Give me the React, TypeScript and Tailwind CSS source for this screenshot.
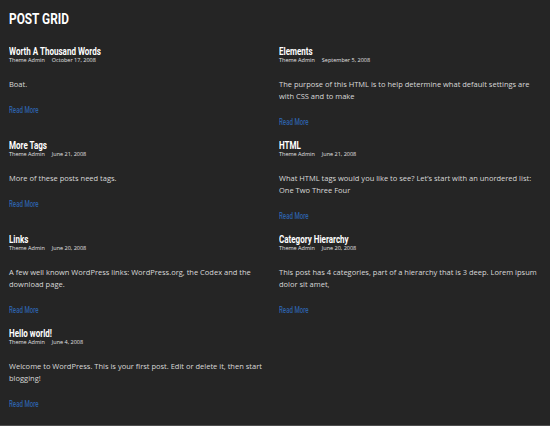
const posts = [
  {
    title: "Worth A Thousand Words",
    date: "October 17, 2008",
    excerpt: "Boat.",
  },
  {
    title: "Elements",
    date: "September 5, 2008",
    excerpt:
      "The purpose of this HTML is to help determine what default settings are with CSS and to make",
  },
  {
    title: "More Tags",
    date: "June 21, 2008",
    excerpt: "More of these posts need tags.",
  },
  {
    title: "HTML",
    date: "June 21, 2008",
    excerpt:
      "What HTML tags would you like to see? Let’s start with an unordered list: One Two Three Four",
  },
  {
    title: "Links",
    date: "June 20, 2008",
    excerpt:
      "A few well known WordPress links: WordPress.org, the Codex and the download page.",
  },
  {
    title: "Category Hierarchy",
    date: "June 20, 2008",
    excerpt:
      "This post has 4 categories, part of a hierarchy that is 3 deep. Lorem ipsum dolor sit amet,",
  },
  {
    title: "Hello world!",
    date: "June 4, 2008",
    excerpt:
      "Welcome to WordPress. This is your first post. Edit or delete it, then start blogging!",
  },
];

// Roboto squeezed sideways stands in for a condensed display face
const display = "font-['Roboto',sans-serif]";

type Post = (typeof posts)[number];

const PostCard = ({ post }: { post: Post }) => {
  return (
    <article className="flex flex-col">
      <h2 className={`${display} text-[11px] leading-[11px] font-bold text-white`}>
        <span className="inline-block origin-left scale-x-[0.73] whitespace-nowrap">
          {post.title}
        </span>
      </h2>
      <div className="flex gap-[7px] font-['Open_Sans',sans-serif] text-[5.5px] leading-[7px] text-[#e2e2e2]">
        <span>Theme Admin</span>
        <span>{post.date}</span>
      </div>
      <p className="mt-[14px] font-['Open_Sans',sans-serif] text-[7.5px] leading-[12px] text-[#d9d9d9]">
        {post.excerpt}
      </p>
      <a
        href="#"
        className={`${display} mt-[15px] text-[8.5px] leading-[10px] font-medium text-[#2d61a8]`}
      >
        <span className="inline-block origin-left scale-x-[0.72] whitespace-nowrap">
          Read More
        </span>
      </a>
    </article>
  );
};

export default function App() {
  return (
    <div className="min-h-[435px] bg-white">
      <section className="bg-[#252525] px-[9px] pt-[10px] pb-[16px] border-b border-[#4d4d4d]">
        <h1 className={`${display} text-[15px] leading-[18px] font-bold text-white`}>
          <span className="inline-block origin-left scale-x-[0.79]">POST GRID</span>
        </h1>
        <div className="mt-[18px] grid grid-cols-2 gap-x-2 gap-y-[13px]">
          {posts.map((post) => (
            <PostCard key={post.title} post={post} />
          ))}
        </div>
      </section>
    </div>
  );
}
